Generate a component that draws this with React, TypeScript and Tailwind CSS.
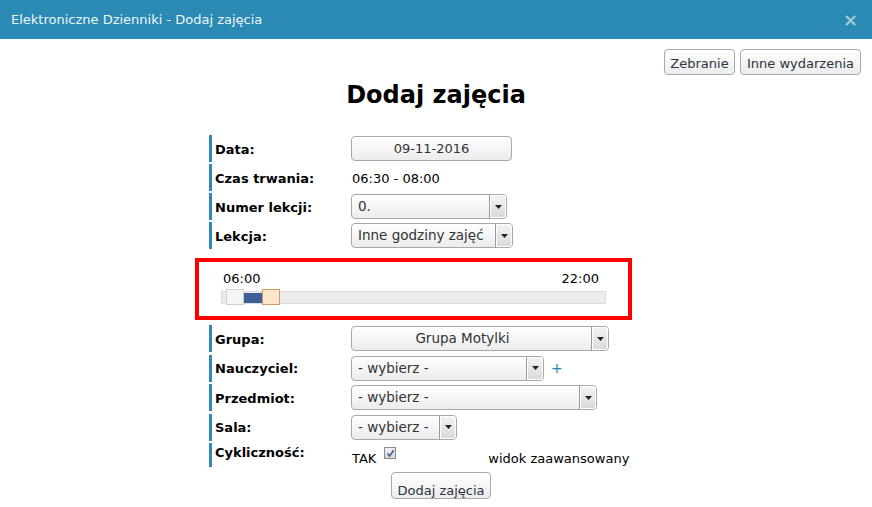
import React from 'react'

const font = "font-['DejaVu_Sans',Verdana,sans-serif]"

function Arrow() {
  return (
    <span className="flex h-full w-[17px] items-center justify-center rounded-r-[3px] border-l border-[#9a9a9a] bg-gradient-to-b from-[#f4f4f4] to-[#d9d9d9] shadow-[inset_0_0_0_1px_#fff]">
      <svg width="7" height="4" viewBox="0 0 7 4">
        <path d="M0 0h7L3.5 4z" fill="#222" />
      </svg>
    </span>
  )
}

function Select({ value, width, center }: { value: string; width: string; center?: boolean }) {
  return (
    <div
      className={`flex h-[25px] items-stretch overflow-hidden rounded-[4px] border border-[#a8a8a8] bg-gradient-to-b from-white to-[#ececec] text-[13.5px] text-[#333] ${width}`}
    >
      <span className={`flex flex-1 items-center truncate ${center ? 'justify-center pr-[18px]' : 'pl-[6px]'}`}>{value}</span>
      <Arrow />
    </div>
  )
}

function Row({ label, children }: { label: string; children: React.ReactNode }) {
  return (
    <div className="flex h-[27px] items-center">
      <div className="flex h-full w-[142px] items-center border-l-[3px] border-[#2f8ab8] pl-[3px] pt-[2px] text-[13px] font-bold text-black">
        {label}
      </div>
      <div className="flex items-center">{children}</div>
    </div>
  )
}

function Btn({ children, className = '' }: { children: React.ReactNode; className?: string }) {
  return (
    <button
      className={`rounded-[4px] border border-[#a9a9a9] bg-gradient-to-b from-white to-[#ececec] px-[5px] text-[13px] text-[#2c3340] ${className}`}
    >
      {children}
    </button>
  )
}

export default function App() {
  return (
    <div className={`h-[507px] w-[872px] overflow-hidden bg-white ${font}`}>
      <div className="flex h-[39px] items-center justify-between bg-[#2a8ab4] pl-[11px] pr-[14px]">
        <span className="text-[13px] text-[#eef6fa]">Elektroniczne Dzienniki - Dodaj zajęcia</span>
        <span className="text-[18px] font-bold leading-none text-[#a5c9dc]">×</span>
      </div>

      <div className="flex justify-end gap-[5px] pr-[11px] pt-[10px]">
        <Btn className="h-[26px] w-[71px] pt-[4px]">Zebranie</Btn>
        <Btn className="h-[26px] w-[121px] pt-[4px]">Inne wydarzenia</Btn>
      </div>

      <h1 className="mt-[5px] text-center text-[24px] font-bold leading-[30px] text-black">Dodaj zajęcia</h1>

      <div className="ml-[195px] mt-[25px] w-[437px]">
        <div className="ml-[14px] flex flex-col gap-[2px]">
          <Row label="Data:">
            <Btn className="h-[25px] w-[161px] text-[13.5px] text-[#333]">09-11-2016</Btn>
          </Row>
          <Row label="Czas trwania:">
            <span className="pl-[1px] pt-[2px] text-[13px] text-black">06:30 - 08:00</span>
          </Row>
          <Row label="Numer lekcji:">
            <Select value="0." width="w-[156px]" />
          </Row>
          <Row label="Lekcja:">
            <Select value="Inne godziny zajęć" width="w-[162px]" />
          </Row>
        </div>

        <div className="mt-[9px] h-[62px] border-[4px] border-[#ff0000] px-[22px] pt-[9px]">
          <div className="flex justify-between px-[2px] pr-[7px] text-[13px] leading-[16px] text-black">
            <span>06:00</span>
            <span>22:00</span>
          </div>
          <div className="relative mt-[4px] h-[13px] border border-[#dcdcdc] bg-[#ececec]">
            <div className="absolute left-[21px] top-[1px] h-[10px] w-[20px] bg-[#3f5f97]" />
            <div className="absolute left-[4px] top-[-3px] h-[16px] w-[18px] border border-[#cfcfcf] bg-[#f5f5f5]" />
            <div className="absolute left-[40px] top-[-3px] h-[16px] w-[18px] border border-[#cf9a66] bg-[#fde4cb]" />
          </div>
        </div>

        <div className="ml-[14px] mt-[5px] flex flex-col gap-[2.5px]">
          <Row label="Grupa:">
            <Select value="Grupa Motylki" width="w-[258px]" center />
          </Row>
          <Row label="Nauczyciel:">
            <Select value="- wybierz -" width="w-[193px]" />
            <span className="ml-[7px] text-[14px] text-[#1786ae]">+</span>
          </Row>
          <Row label="Przedmiot:">
            <Select value="- wybierz -" width="w-[246px]" />
          </Row>
          <Row label="Sala:">
            <Select value="- wybierz -" width="w-[106px]" />
          </Row>
          <div className="flex h-[24px] items-start">
            <div className="flex h-full w-[142px] items-start border-l-[3px] border-[#2f8ab8] pl-[3px] text-[13px] font-bold text-black">
              Cykliczność:
            </div>
            <span className="pl-[1px] pt-[6px] text-[13px] text-black">TAK</span>
            <span className="ml-[8px] mt-[4px] flex h-[12px] w-[12px] items-center justify-center border border-[#8c8c8c] bg-gradient-to-b from-[#f0f0f0] to-[#d8d8d8]">
              <svg width="9" height="9" viewBox="0 0 9 9">
                <path d="M1.5 4.5 L3.6 7 L7.8 1.2" fill="none" stroke="#3d5a96" strokeWidth="1.6" />
              </svg>
            </span>
            <span className="ml-[92px] pt-[6px] text-[13px] text-black">widok zaawansowany</span>
          </div>
        </div>

        <div className="ml-[196px] mt-[5px]">
          <Btn className="h-[27px] w-[100px] pt-[8px] leading-[20px]">Dodaj zajęcia</Btn>
        </div>
      </div>
    </div>
  )
}
